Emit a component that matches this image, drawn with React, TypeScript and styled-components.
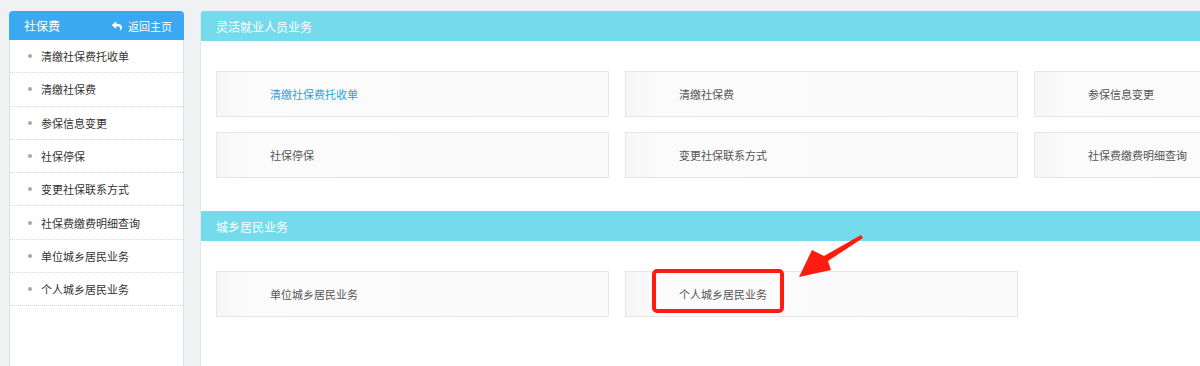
import React from "react";
import styled, { createGlobalStyle } from "styled-components";
import { FaReply } from "react-icons/fa";

const GlobalStyle = createGlobalStyle`
  html, body {
    margin: 0;
    padding: 0;
    background: #f0f1f3;
    overflow: hidden;
    font-family: "Noto Sans CJK SC", "Noto Sans", sans-serif;
  }
`;

const Page = styled.div`
  display: flex;
  align-items: stretch;
  gap: 16px;
  padding: 11px 0 0 9px;
  height: 366px;
  width: 1200px;
  box-sizing: border-box;
  overflow: hidden;
`;

const Sidebar = styled.aside`
  width: 175px;
  flex: none;
  background: #fff;
  border: 1px solid #dfe1e4;
  border-top: none;
  border-bottom: none;
  border-radius: 4px 4px 0 0;
  box-sizing: border-box;
`;

const SideHeader = styled.div`
  height: 29px;
  margin: 0 -1px;
  background: #3aa9f1;
  border-radius: 4px 4px 0 0;
  display: flex;
  align-items: center;
  justify-content: space-between;
  padding: 0 12px 0 15px;
  color: #fff;
`;

const SideTitle = styled.span`
  font-size: 12px;
`;

const BackLink = styled.span`
  display: flex;
  align-items: center;
  gap: 6px;
  font-size: 11px;
`;

const SideList = styled.ul`
  list-style: none;
  margin: 0;
  padding: 0;
`;

const SideItem = styled.li`
  height: 33.3px;
  display: flex;
  align-items: center;
  padding-left: 18px;
  gap: 9px;
  font-size: 11px;
  color: #333;
  border-bottom: 1px dotted #d8d8d8;
  box-sizing: border-box;
`;

const Dot = styled.span`
  width: 4px;
  height: 4px;
  border-radius: 50%;
  background: #a8a8a8;
`;

const Main = styled.main`
  flex: 1;
  min-width: 0;
  overflow: hidden;
  background: #fff;
  border-left: 1px solid #e3e5e8;
  border-radius: 3px 0 0 0;
`;

const Section = styled.section``;

const SectionHeader = styled.div`
  height: 30px;
  background: #73dbec;
  display: flex;
  align-items: center;
  padding-left: 15px;
  color: #fff;
  font-size: 12px;
`;

const CardGrid = styled.div`
  display: grid;
  grid-template-columns: repeat(3, 393px);
  column-gap: 16px;
  row-gap: 15px;
  padding: 30px 0 33px 15px;
`;

const Card = styled.div<{ $active?: boolean }>`
  position: relative;
  height: 46px;
  box-sizing: border-box;
  border: 1px solid #e6e6e6;
  background: linear-gradient(90deg, #f6f6f6 0px, #fbfbfb 30px, #fafafa 100%);
  display: flex;
  align-items: center;
  padding-left: 53px;
  font-size: 11px;
  color: ${(p) => (p.$active ? "#2ba3d9" : "#555")};
`;

const Highlight = styled.div`
  position: absolute;
  left: 26px;
  top: -3px;
  width: 132px;
  height: 44px;
  border: 4px solid #fe1b10;
  border-radius: 5px;
  box-sizing: border-box;
`;

const Arrow = styled.svg`
  position: absolute;
  left: 165px;
  top: -40px;
`;

const items = [
  "清缴社保费托收单",
  "清缴社保费",
  "参保信息变更",
  "社保停保",
  "变更社保联系方式",
  "社保费缴费明细查询",
  "单位城乡居民业务",
  "个人城乡居民业务",
];

const flexCards = [
  "清缴社保费托收单",
  "清缴社保费",
  "参保信息变更",
  "社保停保",
  "变更社保联系方式",
  "社保费缴费明细查询",
];

export default function App() {
  return (
    <>
      <GlobalStyle />
      <Page>
        <Sidebar>
          <SideHeader>
            <SideTitle>社保费</SideTitle>
            <BackLink>
              <FaReply size={10} />
              返回主页
            </BackLink>
          </SideHeader>
          <SideList>
            {items.map((t) => (
              <SideItem key={t}>
                <Dot />
                {t}
              </SideItem>
            ))}
          </SideList>
        </Sidebar>
        <Main>
          <Section>
            <SectionHeader>灵活就业人员业务</SectionHeader>
            <CardGrid>
              {flexCards.map((t, i) => (
                <Card key={t} $active={i === 0}>
                  {t}
                </Card>
              ))}
            </CardGrid>
          </Section>
          <Section>
            <SectionHeader>城乡居民业务</SectionHeader>
            <CardGrid>
              <Card>单位城乡居民业务</Card>
              <Card>
                个人城乡居民业务
                <Highlight />
                <Arrow width="75" height="55" viewBox="0 0 75 55">
                  <polygon
                    points="70,3 33,24 21,18 8,45 40,38 37,29 72,6"
                    fill="#fe1b10"
                  />
                </Arrow>
              </Card>
            </CardGrid>
          </Section>
        </Main>
      </Page>
    </>
  );
}
